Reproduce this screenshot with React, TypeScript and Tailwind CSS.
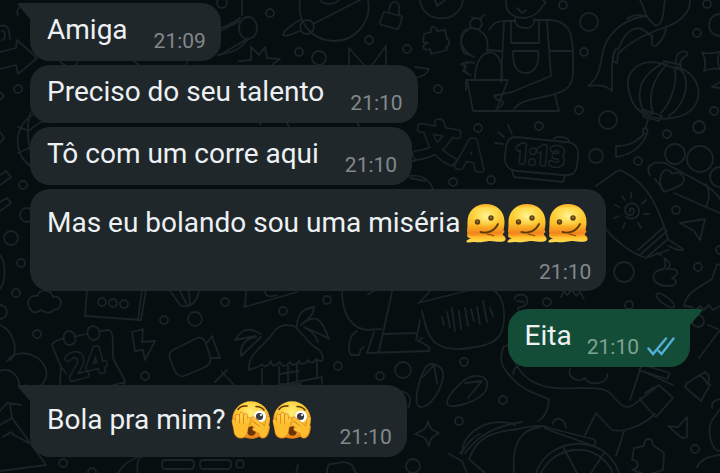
import React from "react";
import clsx from "clsx";

type EmojiName = "melting" | "peeking";

interface Message {
    id: number;
    text: string;
    time: string;
    emojis?: EmojiName[];
    outgoing?: boolean;
    tail?: boolean;
    stacked?: boolean;
}

const groups: Message[][] = [
    [
        { id: 1, text: "Amiga", time: "21:09", tail: true },
        { id: 2, text: "Preciso do seu talento", time: "21:10" },
        { id: 3, text: "Tô com um corre aqui", time: "21:10" },
        { id: 4, text: "Mas eu bolando sou uma miséria", time: "21:10", emojis: ["melting", "melting", "melting"], stacked: true },
    ],
    [{ id: 5, text: "Eita", time: "21:10", outgoing: true, tail: true }],
    [{ id: 6, text: "Bola pra mim?", time: "21:10", emojis: ["peeking", "peeking"], tail: true }],
];

function EmojiGradients() {
    return (
        <svg className="absolute h-0 w-0" aria-hidden="true">
            <defs>
                <radialGradient id="face" cx="0.5" cy="0.3" r="0.7">
                    <stop offset="0" stopColor="#fff07a" />
                    <stop offset="0.5" stopColor="#fccb35" />
                    <stop offset="1" stopColor="#e67c14" />
                </radialGradient>
                <linearGradient id="melt" x1="0" y1="0" x2="0" y2="1">
                    <stop offset="0" stopColor="#f9a825" />
                    <stop offset="0.12" stopColor="#fdd43c" />
                    <stop offset="0.5" stopColor="#fcc22b" />
                    <stop offset="0.76" stopColor="#f3831b" />
                    <stop offset="0.87" stopColor="#ffc12c" />
                    <stop offset="1" stopColor="#ffdf55" />
                </linearGradient>
                <radialGradient id="shine" cx="0.5" cy="0.5" r="0.5">
                    <stop offset="0" stopColor="#fff59a" />
                    <stop offset="1" stopColor="#fff176" stopOpacity="0" />
                </radialGradient>
                <linearGradient id="hand" x1="0" y1="0" x2="0" y2="1">
                    <stop offset="0" stopColor="#ffd04a" />
                    <stop offset="1" stopColor="#fdb927" />
                </linearGradient>
            </defs>
        </svg>
    );
}

function MeltingFace() {
    return (
        <svg className="h-10 w-[41px] shrink-0" viewBox="0 0 41 40" role="img" aria-label="Rosto derretendo">
            <path
                d="M1.500 19C1.500 8 9.500 1 20 1s18.500 7 18.500 18c0 3-.5 6-1 8 1 1 1.500 2 0 3-1 1-1 2 .5 3 2.500 2 2 5-1 5.500-5 1-9-1-14-.5-5 .6-9 2-14 1-3-.4-6 .8-8.500.3-.5-2 2-3 4.500-4-3-.2-4-1.500-4-3 .5-1 .5-2 0-4 .3-2 .5-5 .5-9.300z"
                fill="url(#melt)"
            />
            <ellipse cx="20" cy="13" rx="15" ry="11" fill="url(#shine)" />
            <path d="M1.500 31c3 1.500 8 1.500 12 0s8 0 12 1 8-.5 11-2" fill="none" stroke="#f5921d" strokeWidth="1.200" />
            <circle cx="11.500" cy="19" r="2.700" fill="#5d4012" />
            <circle cx="11.500" cy="18.500" r="1" fill="#a37d34" />
            <circle cx="25" cy="15" r="2.700" fill="#5d4012" />
            <circle cx="25" cy="14.500" r="1" fill="#a37d34" />
            <path d="M14.500 29c7 2 14-1 17.500-8" fill="none" stroke="#5d3c0b" strokeWidth="1.900" strokeLinecap="round" />
            <path d="M21 31c2 1.200 4 0 6.500 1.800" fill="none" stroke="#8b5110" strokeWidth="1.200" strokeLinecap="round" />
        </svg>
    );
}

function PeekingFace() {
    return (
        <svg className="h-10 w-[41px] shrink-0" viewBox="0 0 41 40" role="img" aria-label="Rosto espiando">
            <circle cx="20" cy="20" r="18.800" fill="url(#face)" />
            <path d="M7 9.500c2-3 5-4 9-3.500M25 6.500c3 0 6 1 8 3.500" fill="none" stroke="#5d3506" strokeWidth="1.500" strokeLinecap="round" />
            <ellipse cx="29" cy="16.500" rx="6" ry="6" fill="#fff" />
            <circle cx="28.500" cy="16.500" r="3.600" fill="#3c3c44" />
            <circle cx="30" cy="15" r="1.100" fill="#fff" />
            <ellipse cx="20.500" cy="31" rx="4.500" ry="4.800" fill="#6b350c" />
            <g strokeLinecap="round" strokeLinejoin="round" fill="none">
                {/* left hand, fingers upright over the eye */}
                <path d="M6.500 16v10M10.500 14v10M14.500 15.500V25M18 19l-2 7M2.800 21l1.500 7" stroke="#e58a1c" strokeWidth="4.400" />
                <path d="M3 24c-2 9 1 14.500 7 14.500S17 31 17.500 25z" fill="#e58a1c" />
                <path d="M6.500 16v10M10.500 14v10M14.500 15.500V25M18 19l-2 7M2.800 21l1.500 7" stroke="url(#hand)" strokeWidth="3" />
                <path d="M3.500 23c-2 9 1 14.500 6.500 14.500s7-6.500 7-13.500z" fill="#fdbd2c" />
                {/* right hand, fingers spread below the other eye */}
                <path d="M22 18.500 32 27M21 23.500 31 30M23.500 29l8 4M37 18.500 35 30" stroke="#e58a1c" strokeWidth="4.200" />
                <path d="M28 27c-2 7 0 11.500 4 11.500s6.500-5 7-13z" fill="#e58a1c" />
                <path d="M22 18.500 32 27M21 23.500 31 30M23.500 29l8 4M37 18.500 35 30" stroke="#fdc536" strokeWidth="2.800" />
                <path d="M29 27c-2 6 0 10.500 3 10.500s5.500-5 6-11.500z" fill="#fdbd2c" />
            </g>
        </svg>
    );
}

function DoubleCheck() {
    return (
        <svg className="h-[22px] w-7 shrink-0" viewBox="0 0 28 22" fill="none" stroke="#53afd8" strokeWidth="2.400" strokeLinecap="round" role="img" aria-label="Lida">
            <path d="M1.500 12.500 6 18 19 2.500" />
            <path d="M11.500 14.800 14.500 18 26.500 2.500" />
        </svg>
    );
}

function Bubble({ message }: { message: Message }) {
    const { text, time, emojis = [], outgoing, tail, stacked } = message;

    return (
        <article
            className={clsx(
                "relative flex w-fit max-w-full rounded-[20px] pr-[15px] pl-[17px]",
                outgoing ? "mr-[30px] self-end bg-[#144d37]" : "ml-[30px] bg-[#1f272a]",
                tail && (outgoing ? "rounded-tr-none" : "rounded-tl-none"),
                stacked ? "flex-col gap-5 py-[7px]" : "items-end",
                !stacked && (outgoing ? "gap-[15px]" : "gap-[26px]"),
            )}
        >
            {tail && (
                <svg
                    className={clsx("absolute top-0 h-4 w-[14px]", outgoing ? "-right-[13px]" : "-left-[13px] -scale-x-100")}
                    viewBox="0 0 14 16"
                    aria-hidden="true"
                >
                    <path d="M0 0h11.500c2 0 2 1.500 1 2.700L1 16H0z" className={outgoing ? "fill-[#144d37]" : "fill-[#1f272a]"} />
                </svg>
            )}
            <p
                className={clsx(
                    "flex items-center text-[28px] leading-[34px] text-[#edf1f3]",
                    emojis.length === 0 && "pt-[10px] pb-[14px]",
                    emojis.length > 0 && !stacked && "pt-[18px] pb-5",
                    stacked && "pt-[10px] pr-[2px]",
                )}
            >
                <span>{text}</span>
                {emojis.length > 0 && (
                    <span className="ml-[6px] flex h-[34px] items-center">
                        {emojis.map((name, index) => (name === "melting" ? <MeltingFace key={index} /> : <PeekingFace key={index} />))}
                    </span>
                )}
            </p>
            <div className={clsx("flex items-center gap-2 self-end text-[21px] leading-6", !stacked && "pb-2", outgoing ? "text-[#7fa293]" : "text-[#82888b]")}>
                <time>{time}</time>
                {outgoing && <DoubleCheck />}
            </div>
        </article>
    );
}

// small rings scattered between the doodles: [cx, cy, r]
const rings = [
    [18, 89, 4], [222, 3, 5], [270, 13, 4], [299, 52, 4], [319, 58, 7], [369, 40, 4], [407, 49, 4], [438, 89, 4],
    [563, 5, 4], [589, 22, 9], [584, 52, 4], [707, 4, 4], [697, 33, 4], [720, 25, 11], [579, 110, 4], [608, 120, 9],
    [478, 128, 4], [539, 126, 4], [667, 134, 4], [699, 127, 6], [714, 111, 4], [596, 156, 7], [638, 161, 4], [453, 182, 4],
    [491, 180, 4], [414, 157, 4], [675, 154, 10], [700, 159, 13], [720, 177, 10], [676, 210, 4], [698, 267, 4], [624, 272, 10],
    [547, 302, 4], [629, 305, 4], [720, 250, 4], [23, 185, 4], [11, 238, 7], [27, 215, 7], [21, 263, 4], [16, 293, 4],
    [0, 312, 7], [102, 302, 4], [113, 303, 4], [124, 304, 4], [225, 302, 4], [164, 320, 4], [195, 319, 7], [37, 334, 4],
    [145, 376, 4], [283, 311, 4], [327, 300, 4], [338, 366, 4], [380, 376, 4], [403, 370, 8], [464, 362, 4], [459, 421, 4],
    [503, 400, 4], [695, 449, 4], [240, 464, 4], [413, 466, 7], [63, 463, 4], [92, 472, 4], [698, 321, 6],
];

const doodles = [
    // arrow and signs on the left edge
    "M0 26c7-2 9 1 10 13M0 52l16-4 1-8 20 18-19 16-2-9-16 4M2 31c4-1 4 8 0 9M0 92l4 4-4 4M0 132l4 6-4 5",
    "M18 15c-3-6 4-12 12-11M40 112c-16 4-24 20-22 34 2 12 8 18 16 22M29 131c8-8 15-12 27-10M18 153l13-6M29 131l-11-4M31 112c-4 9-4 25 0 42",
    "M0 175l6-4 5 6-11 8M0 202l7-4 4 5-11 8M0 255c6 7 6 27 0 34",
    // gaps between the bubbles
    "M60 62l5 3M78 61l-2 4M134 61l5 4M188 60l-2 5M260 125l2-4M287 123l2 4M357 122l2 4",
    "M221 28c8-3 14-6 19-10M218 55c18-3 23-7 30-16M242 0v15",
    "M248 17c12 0 12 22 0 22s-12-22 0-22M240 21l-20 10M247 39l-27 16",
    // ringed planet
    "M300 0c-3 20 9 40 34 41 22 0 38-20 34-41M300 20c-8 4-17 12-17 15 3 2 10-1 17-4M313 24 360 0M320 0c3 5 15 5 19 0M307 20c9 0 9 14 0 14s-9-14 0-14",
    "M239 61l12-1 0-13 8 8 6-8 2 11 13 1-8 6M349 66V48l15 17M372 65l14-19v19M415 67l14 2c-2 5-8 8-14 9",
    // padlock
    "M385 12l16 4c2 1 1 2 1 3l-3 8c0 2-2 2-3 2l-14-4c-2 0-2-1-2-3l3-8c0-2 1-2 2-2zM389 12c0-14 12-13 10-1v4",
    // play button and puzzle piece
    "M420 0c2 24 40 25 43 0M435 0l2 6 8-6",
    "M424 34l7-2c-2-6 5-7 6-1l8-1 2 9c4 1 2 8-1 8l1 3-16 4-1-5c-8 3-9-5-2-6l-5-1zM468 30c-9 4-9 22 0 25M467 62l-6 2 5 3-3 4 5 3M466 80v10",
    // gardener holding a cactus
    "M506 0v5c2 12 12 13 19 13 12-2 16-8 18-13l3-2-3-3M517 8l5 5 4-3M515 18v4c3 8 18 8 19 0v-3M489 30c5-8 9-9 16-9h9M534 20h16c22 1 22 18 23 31v22c0 17-13 20-25 23-14 3-27 4-34 13",
    "M504 22l-3 60M511 23v20h28V21M547 21l4 55-39 16-18 4M513 51h25c2 12-3 22-12 22-12 0-13-11-13-22zM487 50l14 1M573 51h-24M467 80h41l-12 31h63l-4-16M467 80l6 31h24",
    "M475 79c0-34 28-35 27-5v6M474 57c-20-9-15-34 3-28 10 5 12 12 10 24M476 29c-10-1-6-11 0-11s8 7 3 11M472 17l2 2M484 15l-3 3M474 63c-10-4-14 9-3 12M496 95c-2 4 1 5 5 5 4 2 2 6-5 9",
    // fish
    "M690 0c1 12-10 22-24 27-15 5-33 12-46 25-5 3-1 10-3 11-6-1-5-9-1-14-7 14-3 32-4 42-7-7-15-6-24-5 15-12 11-24 17-41 7-16 22-27 42-29-7-1-14-2-20 3M640 0c6 10 3 16 16 26 8-3 7-14 9-26M618 50c8-22 19-25 27-19l5 4M666 29c-2 10-12 22-14 15v-9",
    // paper lantern
    "M664 64c-26-7-42 9-34 31 5 21 28 28 51 21 26-9 22-43-5-49M663 63c-10 6-26 16-23 36 1 12 6 15 12 15M667 64c-16 17-19 35-14 49M674 67c5 14-3 35-13 46M678 67c16 14 6 38-9 49M664 61l17 4v5l-17-5zM642 109l20 7-3 5-15-4zM676 62c-1-11 12-14 11-7-3 3-6 3-7 9M648 120l-3 9M645 128c4 0 3 7 0 6s-3-6 0-6zM647 134c-6 14-16 21-31 23v-11c14 0 20-4 28-12",
    "M702 52c5 3 9 1 18 0-3 6-3 12 0 17-6-1-10-1-16 2 2-7 2-13-2-19zM720 82l-8 5 8 1",
    // alarm clock
    "M516 137l49 5c11 0 14 7 13 14l-1 10c-1 8-7 10-14 9l-46-4c-10-1-13-8-12-15l1-9c1-7 5-10 10-10zM554 139c2-4 16-2 15 3M512 171l2 6 49 5 2-6M498 132l6 5M508 125l4 9M495 143l8 1",
    "M400 180c12-8 28-5 33 9M410 178l15 3",
    // sunscreen bottle
    "M596 186l21-15c3-2 6 0 9 2 21 11 33 34 42 66l-22 19c-17-6-30-16-42-31M638 250l26-23M641 254l26-23M646 258l22-8M657 253l4 2M669 240l14 9c0 2-5 2-14-3",
    "M630 212c-2-4 4-5 4-1 0 6-9 5-9-1 0-9 14-9 14 1 0 8-9 9-13 6M631 198v-5M642 204l4-4M644 214h5M638 223l3 5M625 223l-2 5M619 216l-5 2M619 207l-4-2M625 200l-3-4",
    // hand with heart, kite and swirl
    "M650 175c-6-10 5-14 15-12l40 22c14 9 17 16 20 26M655 179l9 12M674 193l32 14c3-8 5-14 0-23M706 207l14 6M664 192c-5-7-5-13-2-19 4-6 9-2 10 1 8-4 15 3 10 10-4 3-12 6-18 8zM680 223l25-4-5 21-6-9z",
    "M664 258c9 5 6 10 2 11 14-1 14 5 6 9 7 3 4 8-4 8-19-1-17-15-8-16 7-1 6-7 4-12zM684 306c2-14 16-19 28-27l5-15 3 1M684 306l8 1 3 4 5-5 4 4 5-5 4 5 7-4",
    "M657 294c4-3 19 9 17 13-4 3-21-10-17-13M561 297l3-6 3 4 5-5 4 6 4-4 4 7M720 330l-21 28M708 325l10 4",
    // cloud, chat card, shell
    "M32 311c-7-7-4-16 5-15 4-9 14-6 16 1 10-3 11 13 1 13-5 5-9 2-13 0-3 2-7 4-9 1zM87 290l-2 26 56 4 5-30M138 320l4-30M170 291l11 15c5 1 14 1 18-14M180 291l7 14M189 291l1 14",
    // calendar
    "M59 397l2-30-9-22c2-5 6-4 12-7M74 337l12-3M100 331l9-1c4 1 4 8 4 28l12 23-1 5M69 331c8 0 9 14 1 14s-9-14-1-14M93 326c8 0 9 14 1 14s-9-14-1-14M113 385l12-3M61 367l5 6",
    "M132 332l11-3-1 13 13-1-10 19-2-10-8 1zM173 350l24-12c7-2 8 2 12 15 4 10-1 13-6 15l-19 8c-6 2-9-4-12-12-4-9-3-12 1-14zM206 344l6-8 8 22h-8",
    // left side figures
    "M0 325c13 5 20 26 10 35M7 361c16-19 44 1 39 16-3 12-12 12-21 8M0 371c12-5 20 8 19 15M0 411l7-8 14 2M10 404l2 14-12 7M3 437l8-5 3 3 15 8M12 418l34 47-46 6M20 387l10 3",
    // beach hut
    "M249 370c-2-17 17-25 24-37 7-10 15-8 21-7 9 7 13 16 21 21 9 5 10 16 5 14l-4-2c-1 4-7 5-8 1-3 5-8 5-9 1-4 5-7 5-9 1-5 6-9 4-10 0-5 5-9 4-9-1-4 7-8 6-9 3-3 4-7 3-13 6zM262 369v17M317 361v16M279 367v17h22M288 366v17M297 363v17M280 374l19-3M265 388l57-11v7",
    "M261 334c-11-7-19-6-26 6l21-4M256 337c-12 2-16 9-15 19l20-19M297 327c0-10 3-18 17-20 0 7-5 12-13 18M305 322c11-7 16-5 24 17-8-5-15-7-25-12M305 328c7 3 11 8 13 14M245 304l-1 3M222 372l14 15M215 382l12-12",
    // seated figure and voice note
    "M246 291l-1 16 52-15M265 291c0 5 4 7 12 4M342 291c0 24 10 38 26 39l13-1M357 331c-8 4-10 18-6 24h8l2-6 3-2M374 332l-7 21 62-2c3-4-6-8-11-10l4-3M383 334l34-1M392 292l-13 59M368 294l6-3M420 320l-4 20M430 291l-10 11",
    "M418 303l56-14c18-5 29 4 30 23 1 20-5 29-19 33-17 4-35 7-48-1-7-4-12-18-15-33M442 317l2 8M447 312l3 15M452 308l3 23M459 311l2 18M465 308l3 18M471 309l3 12M477 307l3 17M483 301l4 21M490 308l3 8",
    // flip-flops
    "M420 407c-9-2 1-37 8-42 6-3 17 2 15 12-2 15-14 31-23 30zM423 377l11-12 3 18M448 405c-5-7 16-26 22-28 14-4 20 3 16 13-5 11-33 19-38 15zM465 383l17-2-14 17M390 389l14 3c8 3 7 11 4 16",
    "M428 421c2 8 3 9 11 12-7 4-9 5-10 13-3-8-4-9-14-12 9-4 12-6 13-13zM449 454l13 7 5 12M460 452c2 5 6-13 20-18",
    "M514 299c3-6 12-6 13 0 2 8-6 7-9 9l2 8M517 301l7 1",
    // reclining figure
    "M504 346c-7 15 0 24 9 33 10 12 23 14 35 20M506 346c6-5 8 0 16 19-5-1-9 5-9 9M514 360c9 20 23 26 40 28 20 2 48-4 57 6 10 12 17 20 30 4M549 399c0 4-2 18-11 22M596 413l16 17c12 3 32-5 43-16M596 413l-11 22M624 431l-8 25M630 400l10-30 33 15M639 370l28 9 3-6-27-8zM640 400l16 17 17-19-14-13zM645 393l9-6M570 369c-3 10 10 14 15 9 4 9 24 6 22-4",
    // armchair, wheel
    "M462 454c0-26 34-38 53-29M469 459c8-22 22-27 49-30 12-3 25-5 31-1M465 453c3-2 13-25 57-31M514 473c-2-24 3-43 26-46M470 460l15 13M545 427l48 12c5 2 2 8-2 6l-45-16c-3-2-3-4-1-2zM553 424c0-8 12-7 13 4M536 473c12-37 70-41 83 0M541 473c15-30 58-32 72 0M563 447l14 26M604 453l-13 20",
    // bottom-right trinkets
    "M687 383l13-8 10 10-9 16-16-14zM695 378l10-6c5 3 5 8 2 12M668 426l10 1 9-10v20l-5 1zM634 448l10-2c1-10 8-9 9-1l11 8-1 17-10 3-6 10-5-10-10-3c10-3 5-11 0-10zM720 409l-9 13c-4 12 1 29 9 29M712 408c0-7 2-7 8-9M697 467c4-8 12-11 23-12",
    // bottom edge
    "M118 473c5-9 12-13 20-16M142 457c-6 2-5 12-4 16M165 460h26c4 0 4 9 0 9h-26c-4 0-4-9 0-9zM203 460h25c4 0 4 9 0 9h-25c-4 0-4-9 0-9zM327 473c0-13 7-8 11-10 6-2 11 0 14 2l4 8M296 473l2-8",
];

function Wallpaper() {
    return (
        <svg
            className="absolute inset-0 h-full w-full"
            viewBox="0 0 720 473"
            preserveAspectRatio="xMidYMid slice"
            fill="none"
            stroke="#1b2327"
            strokeWidth="1.800"
            strokeLinejoin="round"
            strokeLinecap="round"
            aria-hidden="true"
        >
            <defs>
                <g id="lettering" className="font-['Open_Sans','Noto_Sans_CJK_SC',sans-serif]">
                    <text x="416" y="157" fontSize="42" transform="rotate(10 436 142)">文</text>
                    <text x="459" y="168" fontSize="38" transform="rotate(8 470 155)">A</text>
                </g>
                <g id="digits" className="font-['Open_Sans',sans-serif]">
                    <text x="515" y="164" fontSize="25" transform="rotate(5 540 155)">1:13</text>
                    <text x="67" y="375" fontSize="34" transform="rotate(-15 88 365)">24</text>
                </g>
            </defs>
            {doodles.map((d, index) => (
                <path key={index} d={d} />
            ))}
            {rings.map(([cx, cy, r], index) => (
                <circle key={index} cx={cx} cy={cy} r={r} />
            ))}
            {/* thick stroke with a dark core gives hollow, rounded letters */}
            <use href="#lettering" strokeWidth="7" />
            <use href="#lettering" strokeWidth="4" stroke="#070e10" fill="#070e10" />
            <use href="#digits" strokeWidth="5" />
            <use href="#digits" strokeWidth="2" stroke="#070e10" fill="#070e10" />
        </svg>
    );
}

export default function App() {
    return (
        <main className="relative flex min-h-screen flex-col overflow-hidden bg-[#070e10] font-[Roboto,sans-serif]">
            <Wallpaper />
            <EmojiGradients />
            <div className="relative flex flex-col gap-[18px] pt-[3px] pb-4">
                {groups.map((group) => (
                    <section key={group[0].id} className="flex flex-col gap-1">
                        {group.map((message) => (
                            <Bubble key={message.id} message={message} />
                        ))}
                    </section>
                ))}
            </div>
        </main>
    );
}
